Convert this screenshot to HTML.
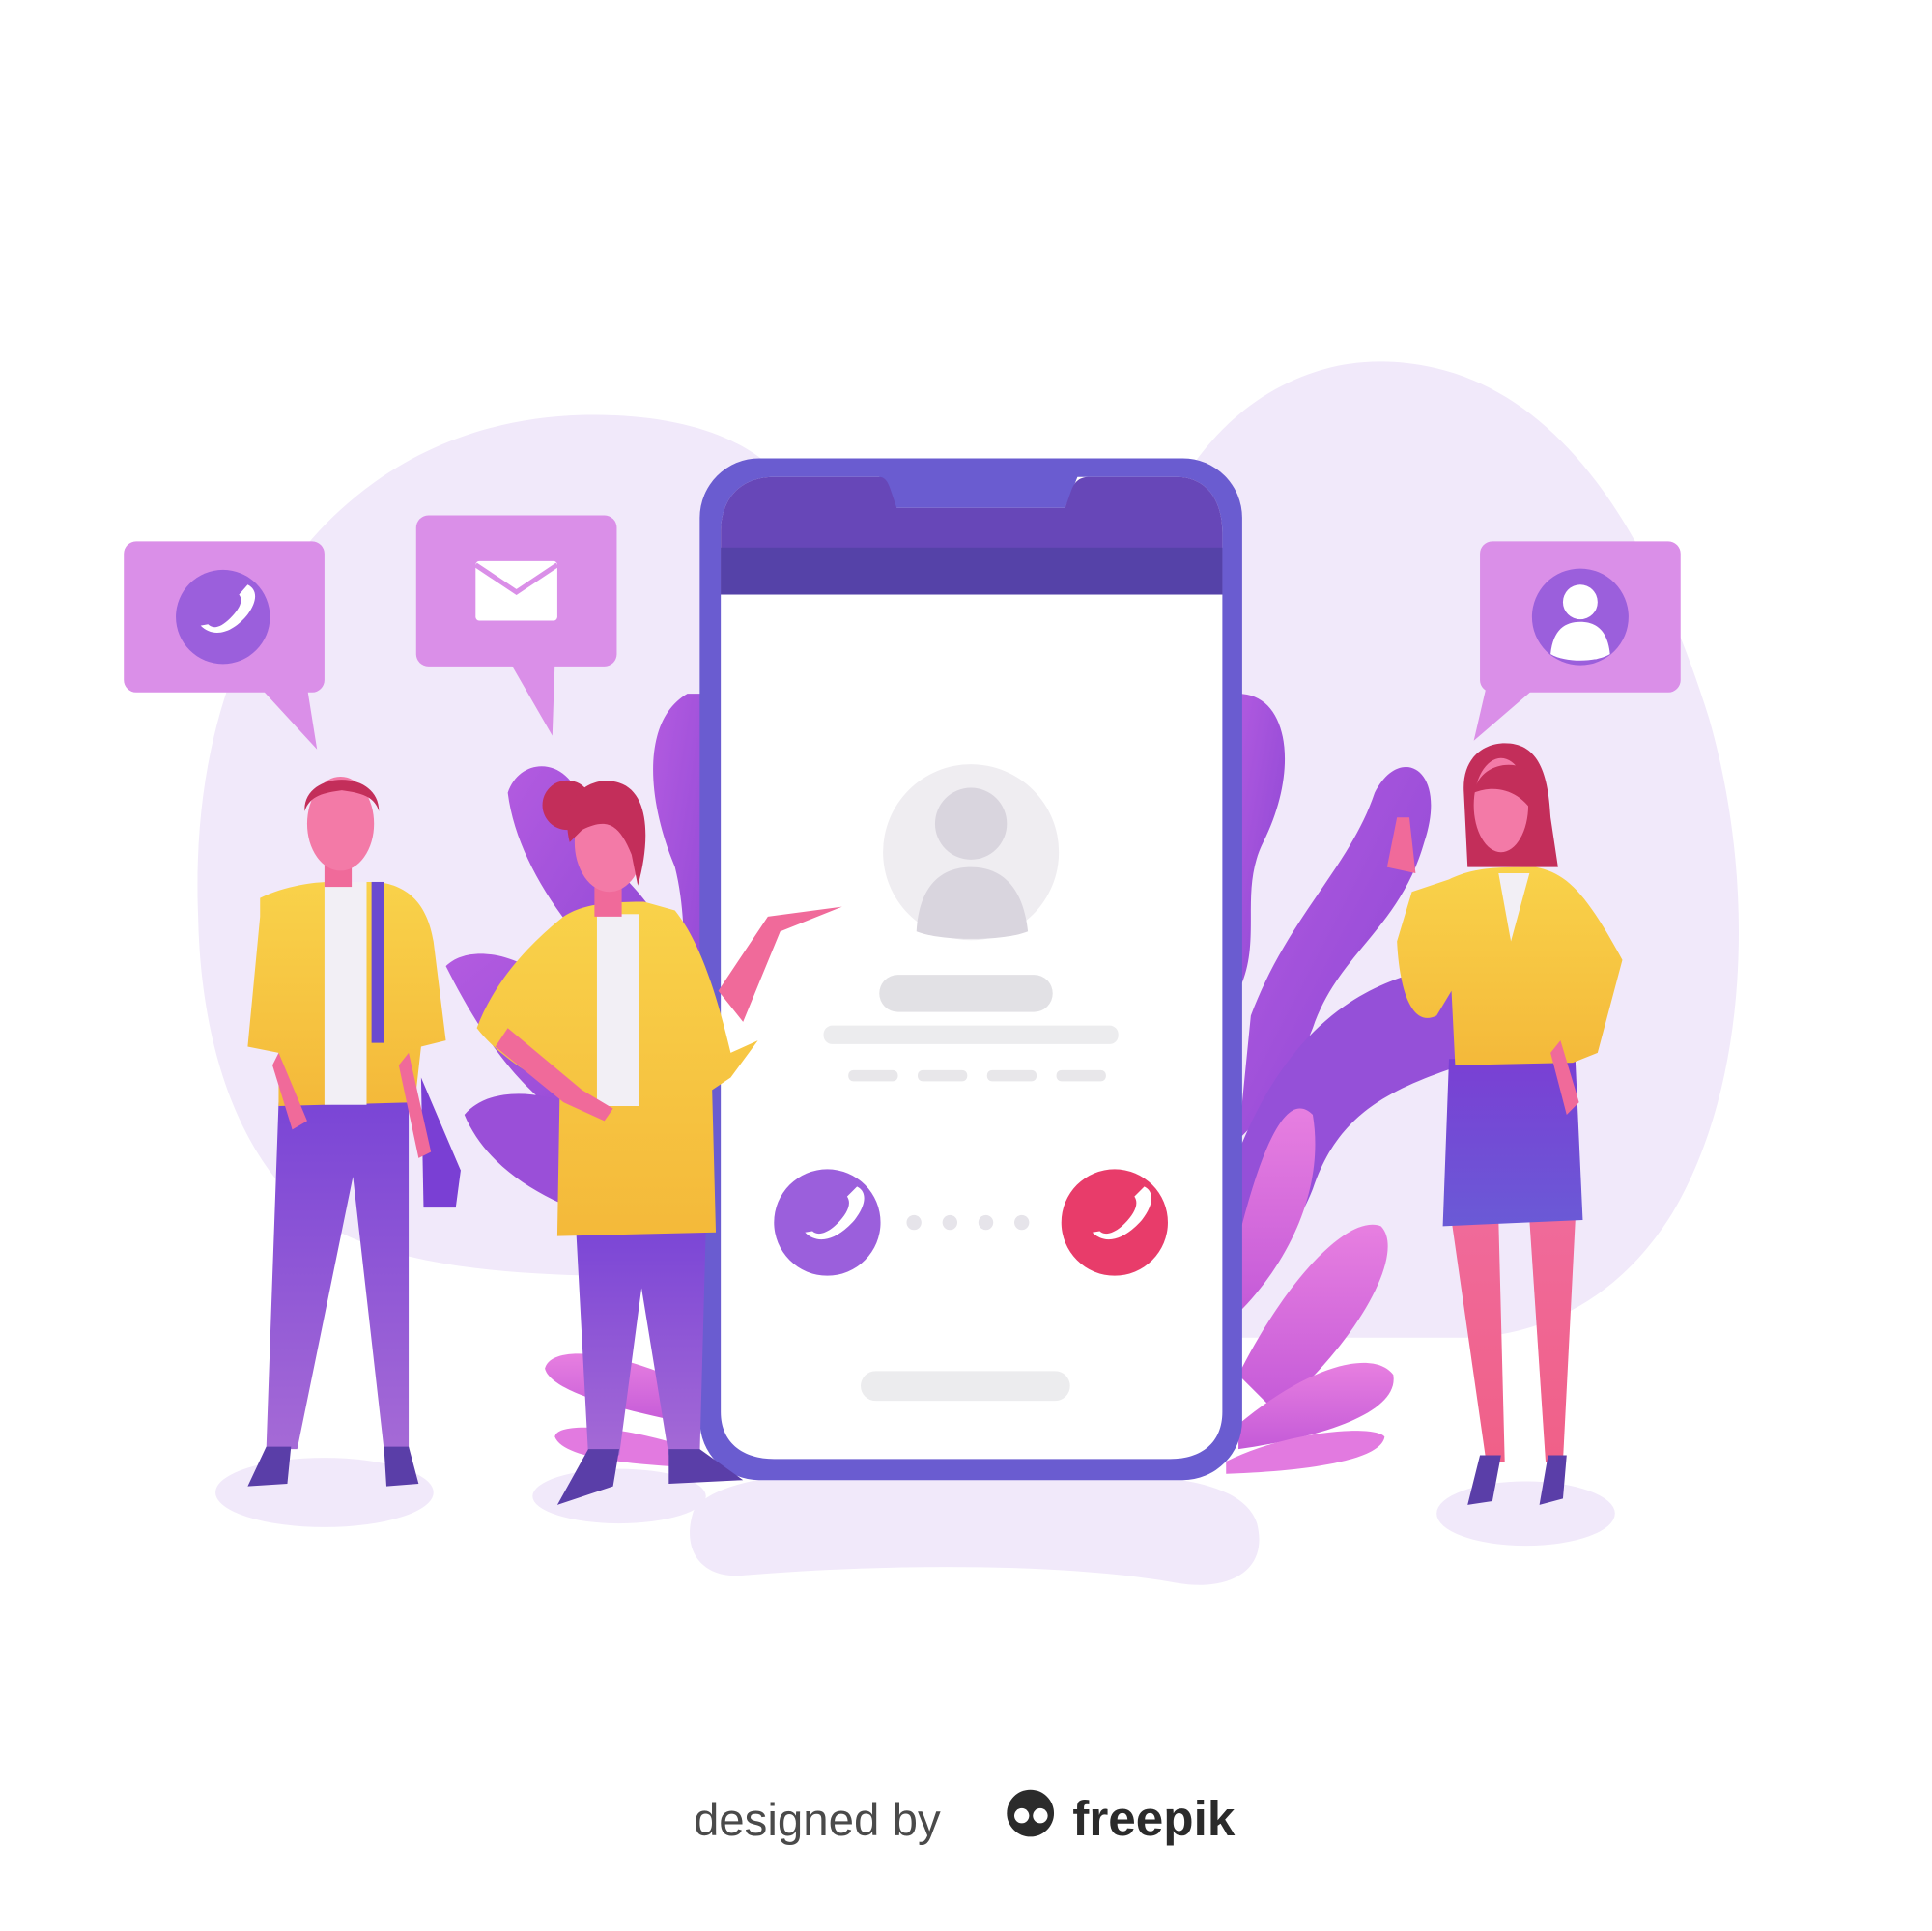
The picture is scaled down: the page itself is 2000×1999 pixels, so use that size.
<!DOCTYPE html>
<html><head><style>
html,body{margin:0;padding:0;background:#fff;width:2000px;height:1999px;overflow:hidden}
svg{display:block}
</style></head><body>
<svg width="2000" height="1999" viewBox="0 0 1560 1559" xmlns="http://www.w3.org/2000/svg">
<defs>
<linearGradient id="pants" x1="0" y1="0" x2="0" y2="1"><stop offset="0" stop-color="#7a45d6"/><stop offset="1" stop-color="#a56ad6"/></linearGradient>
<linearGradient id="jacket" x1="0" y1="0" x2="0" y2="1"><stop offset="0" stop-color="#f9d24a"/><stop offset="1" stop-color="#f4b93a"/></linearGradient>
<linearGradient id="leaf" x1="0" y1="0" x2="1" y2="1"><stop offset="0" stop-color="#b35be0"/><stop offset="1" stop-color="#8b46d4"/></linearGradient>
<linearGradient id="pink" x1="0" y1="0" x2="0" y2="1"><stop offset="0" stop-color="#e77fe0"/><stop offset="1" stop-color="#c45ad8"/></linearGradient>
<linearGradient id="skirt" x1="0" y1="0" x2="0" y2="1"><stop offset="0" stop-color="#7a3fd4"/><stop offset="1" stop-color="#6a5ad6"/></linearGradient>
<linearGradient id="legs" x1="0" y1="0" x2="0" y2="1"><stop offset="0" stop-color="#f06a9a"/><stop offset="1" stop-color="#f06088"/></linearGradient>
</defs>
<path d="M160 740 C150 500 280 340 470 335 C560 333 620 360 640 400 L640 1030 C500 1030 330 1040 250 980 C190 930 162 840 160 740Z" fill="#f1e9fa"/>
<path d="M960 380 C1000 320 1060 290 1120 292 C1250 296 1330 420 1380 580 C1420 720 1410 880 1350 980 C1300 1060 1230 1080 1180 1080 L960 1080Z" fill="#f1e9fa"/>
<path d="M560 1220 C580 1185 700 1185 800 1188 C900 1190 1000 1185 1015 1230 C1025 1270 990 1285 950 1278 C860 1262 720 1262 600 1272 C565 1275 550 1250 560 1220Z" fill="#f1e9fa"/>
<ellipse cx="262" cy="1205" rx="88" ry="28" fill="#f1e9fa"/>
<ellipse cx="500" cy="1208" rx="70" ry="22" fill="#f1e9fa"/>
<ellipse cx="1232" cy="1222" rx="72" ry="26" fill="#f1e9fa"/>
<path d="M555 560 C520 580 520 640 545 700 C560 760 545 820 560 880 L580 880 L580 560Z" fill="url(#leaf)"/>
<path d="M410 640 C420 610 460 610 470 650 C480 700 520 710 540 760 L540 820 C500 800 420 720 410 640Z" fill="url(#leaf)"/>
<path d="M360 780 C380 760 430 770 460 810 C490 850 520 860 560 880 L560 930 C480 930 420 900 360 780Z" fill="url(#leaf)"/>
<path d="M375 900 C400 870 470 880 520 930 L560 960 L560 1000 C480 990 400 960 375 900Z" fill="#9a4fd8"/>
<path d="M1000 560 C1040 560 1050 620 1020 680 C1000 720 1020 760 1000 800 L995 560Z" fill="url(#leaf)"/>
<path d="M1010 820 C1040 740 1090 700 1110 640 C1130 600 1170 620 1150 680 C1130 750 1080 770 1060 830 C1040 880 1020 900 1000 920Z" fill="url(#leaf)"/>
<path d="M1000 930 C1040 830 1100 790 1170 780 L1180 860 C1120 880 1080 900 1060 960 C1040 1010 1010 1030 995 1040Z" fill="#9550d8"/>
<path d="M1000 1000 C1020 920 1040 880 1060 900 C1070 960 1040 1020 1000 1060Z" fill="url(#pink)"/>
<path d="M1000 1110 C1040 1030 1090 980 1115 990 C1135 1010 1100 1080 1030 1140Z" fill="url(#pink)"/>
<path d="M1000 1150 C1060 1100 1110 1090 1125 1110 C1130 1140 1070 1160 1000 1170Z" fill="url(#pink)"/>
<path d="M990 1180 C1040 1155 1110 1150 1118 1160 C1115 1180 1050 1188 990 1190Z" fill="#e27ae0"/>
<path d="M560 1120 C500 1090 445 1085 440 1105 C445 1125 510 1140 560 1150Z" fill="url(#pink)"/>
<path d="M560 1170 C500 1150 450 1148 448 1160 C455 1178 510 1182 560 1185Z" fill="#e27ae0"/>
<rect x="565" y="370" width="438" height="825" rx="48" fill="#6a5cd0"/>
<path d="M582 430 C582 400 600 385 625 385 L710 385 L722 410 L860 410 L870 385 L950 385 C975 385 987 405 987 430 L987 1140 C987 1165 970 1178 945 1178 L625 1178 C600 1178 582 1165 582 1140Z" fill="#ffffff"/>
<path d="M582 430 C582 400 600 385 625 385 L710 385 C716 385 718 392 720 398 L724 410 L860 410 L865 396 C868 388 872 385 880 385 L950 385 C975 385 987 405 987 430 L987 480 L582 480Z" fill="#6747b8"/>
<rect x="582" y="442" width="405" height="38" fill="#5542a8"/>
<circle cx="784" cy="688" r="71" fill="#efedf1"/>
<circle cx="784" cy="665" r="29" fill="#d9d5de"/>
<path d="M740 752 C742 715 760 700 784 700 C808 700 826 715 830 752 C810 760 760 760 740 752Z" fill="#d9d5de"/>
<rect x="710" y="787" width="140" height="30" rx="15" fill="#e2e1e5"/>
<rect x="665" y="828" width="238" height="15" rx="7" fill="#ececee"/>
<rect x="685" y="864" width="40" height="9" rx="4" fill="#e8e7ea"/>
<rect x="741" y="864" width="40" height="9" rx="4" fill="#e8e7ea"/>
<rect x="797" y="864" width="40" height="9" rx="4" fill="#e8e7ea"/>
<rect x="853" y="864" width="40" height="9" rx="4" fill="#e8e7ea"/>
<circle cx="668" cy="987" r="43" fill="#9b5fdc"/>
<circle cx="900" cy="987" r="43" fill="#e83c6a"/>
<path d="M650 995 C660 1005 675 1002 690 985 C700 972 700 962 692 958 L684 966 C688 972 684 980 676 988 C668 996 660 998 656 994Z" fill="#fff"/>
<path d="M882 995 C892 1005 907 1002 922 985 C932 972 932 962 924 958 L916 966 C920 972 916 980 908 988 C900 996 892 998 888 994Z" fill="#fff"/>
<circle cx="738" cy="987" r="6" fill="#e6e4ea"/><circle cx="767" cy="987" r="6" fill="#e6e4ea"/><circle cx="796" cy="987" r="6" fill="#e6e4ea"/><circle cx="825" cy="987" r="6" fill="#e6e4ea"/>
<rect x="695" y="1107" width="169" height="24" rx="12" fill="#ececee"/>
<rect x="100" y="437" width="162" height="122" rx="10" fill="#da8fe8"/>
<path d="M210 555 L256 605 L248 555Z" fill="#da8fe8"/>
<circle cx="180" cy="498" r="38" fill="#9b5fdc"/>
<path d="M162 505 C172 515 187 512 200 496 C208 485 208 476 200 472 L193 480 C197 485 193 492 186 499 C178 507 172 508 168 504Z" fill="#fff"/>
<rect x="336" y="416" width="162" height="122" rx="10" fill="#da8fe8"/>
<path d="M412 535 L446 594 L448 535Z" fill="#da8fe8"/>
<rect x="384" y="453" width="66" height="48" rx="3" fill="#fff"/>
<path d="M384 456 L417 478 L450 456" fill="none" stroke="#da8fe8" stroke-width="4"/>
<rect x="1195" y="437" width="162" height="122" rx="10" fill="#da8fe8"/>
<path d="M1240 555 L1190 598 L1200 555Z" fill="#da8fe8"/>
<circle cx="1276" cy="498" r="39" fill="#9b5fdc"/>
<circle cx="1276" cy="486" r="14" fill="#fff"/>
<path d="M1252 528 C1254 508 1264 502 1276 502 C1288 502 1298 508 1300 528 C1288 535 1264 535 1252 528Z" fill="#fff"/>
<path d="M225 890 L270 890 L300 890 L330 890 L330 1170 L310 1170 L285 950 L240 1170 L215 1170Z" fill="url(#pants)"/>
<path d="M215 1168 L235 1168 L232 1198 L200 1200Z" fill="#5a3ea8"/>
<path d="M310 1168 L330 1168 L338 1198 L312 1200Z" fill="#5a3ea8"/>
<path d="M210 725 C230 715 255 712 265 712 L305 712 C330 715 345 730 350 760 L360 840 L340 845 L335 890 L225 893 L225 850 L200 845 L210 740Z" fill="url(#jacket)"/>
<rect x="262" y="712" width="34" height="180" fill="#f2eff5"/>
<rect x="300" y="712" width="10" height="130" fill="#6a4ad0"/>
<path d="M340 870 L372 945 L368 975 L342 975Z" fill="#7a3fd4"/>
<rect x="262" y="690" width="22" height="26" fill="#f06a9a"/>
<ellipse cx="275" cy="665" rx="27" ry="38" fill="#f37aa7"/>
<path d="M246 655 C244 622 306 620 306 655 C302 642 290 640 276 638 C262 640 250 642 246 655Z" fill="#c32e5a"/>
<path d="M225 850 L248 905 L236 912 L220 860Z" fill="#f06a9a"/>
<path d="M330 850 L348 930 L338 935 L322 860Z" fill="#f06a9a"/>
<path d="M465 990 L570 990 L565 1175 L540 1175 L518 1040 L500 1175 L475 1175Z" fill="url(#pants)"/>
<path d="M475 1170 L500 1170 L495 1200 L450 1215Z" fill="#5a3ea8"/>
<path d="M540 1170 L565 1170 L600 1195 L540 1198Z" fill="#5a3ea8"/>
<path d="M580 800 L620 740 L680 732 L630 752 L600 825Z" fill="#f06a9a"/>
<path d="M455 740 C470 730 490 728 520 728 L545 735 C565 760 578 800 590 850 L612 840 L590 870 L575 880 L578 995 L450 998 L452 880 C430 870 400 850 385 830 C400 790 430 760 455 740Z" fill="url(#jacket)"/>
<rect x="482" y="738" width="34" height="155" fill="#f2eff5"/>
<path d="M410 830 L470 880 L495 895 L488 905 L455 890 L400 845Z" fill="#f06a9a"/>
<rect x="480" y="708" width="22" height="32" fill="#f06a9a"/>
<ellipse cx="492" cy="680" rx="28" ry="40" fill="#f37aa7"/>
<circle cx="458" cy="650" r="20" fill="#c32e5a"/>
<path d="M460 680 C450 640 480 625 500 632 C525 640 525 680 515 715 L510 690 C500 665 490 660 470 670 Z" fill="#c32e5a"/>
<path d="M1172 985 L1210 985 L1215 1180 L1200 1180Z" fill="url(#legs)"/>
<path d="M1235 985 L1272 985 L1262 1180 L1248 1180Z" fill="url(#legs)"/>
<path d="M1195 1175 L1212 1175 L1205 1212 L1185 1215Z" fill="#5a3ea8"/>
<path d="M1250 1175 L1265 1175 L1262 1210 L1243 1215Z" fill="#5a3ea8"/>
<path d="M1170 855 L1272 855 L1278 985 L1165 990Z" fill="url(#skirt)"/>
<path d="M1170 710 C1190 700 1210 700 1240 700 C1265 705 1280 720 1310 775 L1290 850 L1270 858 L1175 860 L1172 800 L1160 820 C1140 830 1130 800 1128 760 L1140 720 Z" fill="url(#jacket)"/>
<path d="M1210 705 L1235 705 L1220 760Z" fill="#f2eff5"/>
<path d="M1120 700 L1128 660 L1138 660 L1143 705 Z" fill="#f06a9a"/>
<path d="M1260 840 L1275 890 L1265 900 L1252 850Z" fill="#f06a9a"/>
<path d="M1182 640 C1180 610 1200 600 1215 600 C1240 600 1250 620 1252 660 L1258 700 L1230 700 L1200 700 L1185 700Z" fill="#c32e5a"/>
<ellipse cx="1212" cy="650" rx="22" ry="38" fill="#f37aa7"/>
<path d="M1190 640 C1195 615 1225 612 1238 625 L1240 660 C1230 640 1210 632 1190 640Z" fill="#c32e5a"/>
<text x="560" y="1482" font-family="'Liberation Sans',sans-serif" font-size="37" fill="#4a4a4a">designed by</text>
<circle cx="832" cy="1464" r="19" fill="#2b2b2b"/>
<circle cx="825" cy="1466" r="6" fill="#fff"/><circle cx="840" cy="1466" r="6" fill="#fff"/>
<text x="866" y="1482" font-family="'Liberation Sans',sans-serif" font-size="40" font-weight="bold" fill="#2b2b2b">freepik</text>
</svg>
</body></html>
